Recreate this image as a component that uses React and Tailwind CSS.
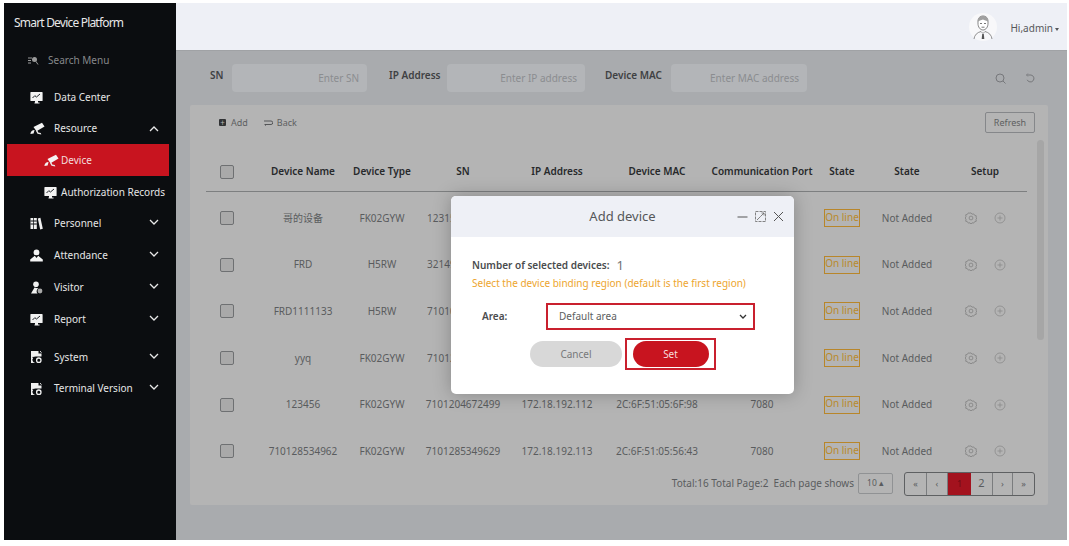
import React from "react";

const Monitor = () => (
  <svg width="13" height="13" viewBox="0 0 13 13" className="shrink-0">
    <path d="M1 1h11a.6.6 0 0 1 .6.6v7.800a.6.6 0 0 1-.6.6H1a.6.6 0 0 1-.6-.6V1.600A.6.6 0 0 1 1 1z" fill="#f2f2f2" />
    <path d="M2.500 7l2.300-2.300 1.700 1.300 3.500-3" fill="none" stroke="#20242a" strokeWidth="1" />
    <path d="M5 10h3v1.500h1.500v1h-5v-1H5z" fill="#f2f2f2" />
  </svg>
);
const Camera = () => (
  <svg width="15" height="13" viewBox="0 0 15 13" className="shrink-0">
    <path d="M3.500 5L12 .8l2.500 3.700-8 4.800z" fill="#f4f4f4" />
    <path d="M6 9l1.300-.7 1 2.200 2.500.5.500 1.500-3.800-.8z" fill="#e8e8e8" />
    <path d="M.4 12c.2-2.600 1.800-4 4.200-4l-1 3.500z" fill="#f4f4f4" />
  </svg>
);
const Books = () => (
  <svg width="13" height="13" viewBox="0 0 13 13" className="shrink-0">
    <path d="M.5 1h2.800v11H.5zM4 1h2.800v11H4z" fill="#f0f0f0" />
    <path d="M.5 4h6.300M.5 7h6.300" stroke="#0b0d10" strokeWidth="1" />
    <path d="M7.800 1.400l2.600-.6 2.400 11-2.600.6z" fill="#f0f0f0" />
  </svg>
);
const Person = () => (
  <svg width="13" height="13" viewBox="0 0 13 13" className="shrink-0">
    <circle cx="6.500" cy="3.400" r="2.900" fill="#f4f4f4" />
    <path d="M4.800 6.800L.2 10.400v2.100h12.600v-2.100L8.200 6.800 6.500 9z" fill="#f4f4f4" />
  </svg>
);
const Visitor = () => (
  <svg width="13" height="13" viewBox="0 0 13 13" className="shrink-0">
    <circle cx="6" cy="3.200" r="2.800" fill="#f0f0f0" />
    <path d="M4.500 6.500L1 12.500h6.500A3 3 0 0 1 8.600 7.500z" fill="#f0f0f0" />
    <circle cx="10" cy="10" r="2.400" fill="#a8a8a8" />
  </svg>
);
const Sys = () => (
  <svg width="13" height="14" viewBox="0 0 13 14" className="shrink-0">
    <path d="M1 1h7.500v2.500H11.500V6.500H6.500A2.900 2.900 0 0 0 5.400 13H1z" fill="#f0f0f0" />
    <path d="M2.500 7.400h2.500M2.500 9.800h1.500" stroke="#0b0d10" strokeWidth="1" />
    <circle cx="8.800" cy="10.200" r="2.200" fill="none" stroke="#f0f0f0" strokeWidth="1.300" />
    <path d="M10 1.200l1.500 1.300" stroke="#f0f0f0" strokeWidth="1" />
  </svg>
);
const Chev = ({ up }) => (
  <svg width="10" height="6" viewBox="0 0 10 6" className={up ? "shrink-0" : "mb-[3px] shrink-0"}>
    <path d={up ? "M1 5l4-4 4 4" : "M1 1l4 4 4-4"} fill="none" stroke="#e8e8e8" strokeWidth="1.300" />
  </svg>
);

const menu = [
  { label: "Personnel", icon: <Books />, h: "h-[31.500px]" },
  { label: "Attendance", icon: <Person />, h: "h-[31.500px]" },
  { label: "Visitor", icon: <Visitor />, h: "h-[32px]" },
  { label: "Report", icon: <Monitor />, h: "h-[32px]" },
];

function Item({ icon, label, up }) {
  return (
    <div className="flex h-full items-center pl-[26px] pr-[17px]">
      <span className="flex w-[24px] items-center">{icon}</span>
      <span className="flex-1 text-[#e6e6e6]">{label}</span>
      <Chev up={up} />
    </div>
  );
}

const rows = [
  ["哥的设备", "FK02GYW", "12315"],
  ["FRD", "H5RW", "32149"],
  ["FRD1111133", "H5RW", "71010"],
  ["yyq", "FK02GYW", "71012"],
  ["123456", "FK02GYW", "7101204672499", "172.18.192.112", "2C:6F:51:05:6F:98", "7080"],
  ["710128534962", "FK02GYW", "7101285349629", "172.18.192.113", "2C:6F:51:05:56:43", "7080"],
];

const gridCols = "grid grid-cols-[56px_82px_76px_86px_102px_98px_112px_48px_82px_74px]";

const Check = () => (
  <div className="pl-[14px]">
    <div className="h-[14px] w-[14px] rounded-[2px] border border-[#6e7072] bg-[#a9a9a9]" />
  </div>
);

const Gear = () => (
  <svg width="12" height="12" viewBox="0 0 12 12">
    <path d="M6 .8l1 1.400 1.700-.3.900 1.400 1.700.5-.3 1.800L11.800 6l-.8 1.400.3 1.800-1.700.5-.9 1.400-1.700-.3-1 1.400-1-1.400-1.700.3-.9-1.400-1.700-.5.3-1.800L.2 6 1 4.600l-.3-1.800 1.700-.5.900-1.400 1.700.3z" fill="none" stroke="#828282" strokeWidth=".8" />
    <circle cx="6" cy="6" r="1.900" fill="none" stroke="#828282" strokeWidth=".8" />
  </svg>
);
const Plus = () => (
  <svg width="12" height="12" viewBox="0 0 12 12">
    <circle cx="6" cy="6" r="5" fill="none" stroke="#8a8a8a" strokeWidth=".8" />
    <path d="M3.500 6h5M6 3.500v5" stroke="#8a8a8a" strokeWidth=".8" />
  </svg>
);

function Avatar() {
  return (
    <svg width="28" height="28" viewBox="0 0 28 28" className="mb-[3px]">
      <circle cx="14" cy="14" r="14" fill="#f8f8fa" />
      <path d="M9 10c-.5-5 2-7 5-7s5.500 2 5 7c.2 4-2.200 7-5 7s-5.200-3-5-7z" fill="#fff" stroke="#6a6a6a" strokeWidth=".8" />
      <path d="M9 9c1-2 3-1.500 5-2.500 1 1 4 1 5 2.500 .5-4-2-6-5-6s-5.500 2-5 6z" fill="#a0a0a0" />
      <path d="M11 10.500h2M15 10.500h2M12.500 14.200h3" stroke="#555" strokeWidth=".8" />
      <path d="M5 26c.5-4 3-6.500 7-7.500l2 2 2-2c4 1 6.500 3.500 7 7.500" fill="none" stroke="#777" strokeWidth=".8" />
      <path d="M13.200 21h1.600l.5 5h-2.600z" fill="#555" />
    </svg>
  );
}

function Field({ label, placeholder, labelW, w }) {
  return (
    <div className="flex items-center">
      <span className={`${labelW} mb-[5px] font-semibold text-[#3f4143]`}>{label}</span>
      <div className={`${w} flex h-[28px] items-center justify-end rounded-[4px] bg-[#b3b5b8] pr-[8px] text-[#8b8d90]`}>{placeholder}</div>
    </div>
  );
}

const pageWidths = ["w-[22px]", "w-[21px]", "w-[23px]", "w-[22px] text-[11px]", "w-[20px]", "w-[21px]"];

export default function App() {
  return (
    <div className="relative h-[546px] w-[1069px] overflow-hidden bg-white pb-[6px] pl-[4px] pr-[2px] pt-[3px] text-[10px] font-['Noto_Sans','Noto_Sans_CJK_SC',sans-serif]">
      <div className="flex h-full">
        <aside className="flex w-[172px] shrink-0 flex-col bg-[#0b0d10]">
          <div className="flex h-[40px] items-center pl-[10px] text-[12px] tracking-[-0.8px] text-[#e8e8e8]">Smart Device Platform</div>
          <div className="flex h-[35px] items-center pl-[23px] text-[#86888a]">
            <svg width="12" height="9" viewBox="0 0 12 9" className="mr-[9px]">
              <path d="M1 2h4M1 4.500h3M1 7h3" stroke="#9a9a9a" strokeWidth="1" />
              <circle cx="7.500" cy="3.500" r="2.500" fill="#9a9a9a" />
              <path d="M9 5.500l2 3" stroke="#9a9a9a" strokeWidth="1" />
            </svg>
            Search Menu
          </div>
          <div className="mt-[3px] h-[32px]">
            <div className="flex h-full items-center pl-[26px]">
              <span className="flex w-[24px] items-center"><Monitor /></span>
              <span className="text-[#e6e6e6]">Data Center</span>
            </div>
          </div>
          <div className="h-[31px]"><Item icon={<Camera />} label="Resource" up /></div>
          <div className="ml-[3px] mr-[7px] flex h-[32px] items-center bg-[#c8141f] pl-[37px] text-[#f2dede]">
            <span className="flex w-[17px] items-center"><Camera /></span>
            Device
          </div>
          <div className="flex h-[32px] items-center pl-[40px] text-[#e6e6e6]">
            <span className="flex w-[17px] items-center"><Monitor /></span>
            Authorization Records
          </div>
          {menu.map((m) => (
            <div key={m.label} className={m.h}><Item icon={m.icon} label={m.label} /></div>
          ))}
          <div className="h-[6px]" />
          <div className="h-[32px]"><Item icon={<Sys />} label="System" /></div>
          <div className="h-[31px]"><Item icon={<Sys />} label="Terminal Version" /></div>
        </aside>

        <main className="flex min-w-0 flex-1 flex-col bg-[#a9abae]">
          <header className="flex h-[48px] shrink-0 items-center justify-end border-b border-[#a0a2a5] bg-[#eef0f6] pr-[8px] pt-[4px]">
            <Avatar />
            <span className="ml-[13px] text-[#55575a]">Hi,admin</span>
            <span className="ml-[2px] mt-[2px] h-0 w-0 border-x-[2.500px] border-t-[3px] border-x-transparent border-t-[#55575a]" />
          </header>

          <div className="flex h-[54px] shrink-0 items-center justify-between pl-[34px] pr-[32px]">
            <div className="flex items-center">
              <Field label="SN" placeholder="Enter SN" labelW="w-[22px]" w="w-[135px]" />
              <Field label="IP Address" placeholder="Enter IP address" labelW="ml-[22px] w-[58px]" w="w-[138px]" />
              <Field label="Device MAC" placeholder="Enter MAC address" labelW="ml-[20px] w-[66px]" w="w-[136px]" />
            </div>
            <div className="flex items-center gap-[19px]">
              <svg width="11" height="11" viewBox="0 0 11 11"><circle cx="5" cy="5" r="4" fill="none" stroke="#707275" strokeWidth=".9" /><path d="M8 8l2.500 2.500" stroke="#707275" strokeWidth=".9" /></svg>
              <svg width="10" height="11" viewBox="0 0 10 11"><path d="M2.500 2H6a3.500 3.500 0 1 1-3.800 4.800M2.800.6L1.500 2l1.300 1.400" fill="none" stroke="#707275" strokeWidth=".9" /></svg>
            </div>
          </div>

          <section className="relative ml-[14px] mr-[19px] flex h-[400px] shrink-0 flex-col rounded-[2px] bg-[#b4b4b4] pl-[16px] pr-[21px]">
            <div className="flex h-[45px] shrink-0 items-center justify-between pb-[10px] pl-[13px]">
              <div className="flex items-center text-[9px] text-[#5d5f61]">
                <span className="mr-[5px] flex h-[7px] w-[7px] items-center justify-center rounded-[1px] bg-[#303234] text-[8px] leading-none text-[#b4b4b4]">+</span>
                Add
                <svg width="9" height="6" viewBox="0 0 9 6" className="ml-[16px] mr-[4px]"><path d="M0 1h7a1.500 1.500 0 0 1 0 3.500H1M2 5.500L.5 4.500" fill="none" stroke="#4a4c4e" strokeWidth=".9" /></svg>
                Back
              </div>
              <div className="-mr-[8px] flex h-[21px] w-[50px] items-center justify-center rounded-[2px] border border-[#85878a] text-[9px] text-[#5d5f61]">Refresh</div>
            </div>

            <div className={`${gridCols} h-[42px] shrink-0 items-center border-b border-[#7d7f80] pt-[2px] text-center font-semibold text-[#27292b]`}>
              <Check />
              <span>Device Name</span>
              <span>Device Type</span>
              <span>SN</span>
              <span>IP Address</span>
              <span>Device MAC</span>
              <span className="whitespace-nowrap">Communication Port</span>
              <span>State</span>
              <span>State</span>
              <span>Setup</span>
            </div>
            <div className="h-[3px] shrink-0" />
            {rows.map((r, i) => (
              <div key={i} className={`${gridCols} h-[46.600px] shrink-0 items-center text-center text-[#5a5c5e]`}>
                <Check />
                <span>{r[0]}</span>
                <span>{r[1]}</span>
                <span className={r[3] ? "" : "pl-[7px] text-left"}>{r[2]}</span>
                <span>{r[3] || ""}</span>
                <span className="whitespace-nowrap">{r[4] || ""}</span>
                <span>{r[5] || ""}</span>
                <span className="mx-auto flex h-[18px] w-[36px] items-center justify-center whitespace-nowrap border border-[#b8862a] pb-[2px] text-[#b98a2c]">On line</span>
                <span>Not Added</span>
                <span className="flex items-center justify-center gap-[17px]"><Gear /><Plus /></span>
              </div>
            ))}
            <div className="mt-[-3px] flex items-center justify-end text-[#5a5c5e]">
              <span>Total:16 Total Page:2&nbsp; Each page shows</span>
              <span className="ml-[4px] flex h-[21px] w-[35px] items-center justify-center rounded-[2px] border border-[#909294] text-[8.500px]">10 ▴</span>
              <div className="-mr-[8px] ml-[11px] flex h-[24px] overflow-hidden rounded-[3px] border border-[#5e6062] text-[9px]">
                {["«", "‹", "1", "2", "›", "»"].map((p, i) => (
                  <span key={p} className={`flex items-center justify-center ${pageWidths[i]} ${i === 2 ? "bg-[#a3121e] text-[#6e0c14]" : i === 5 ? "" : "border-r border-[#7a7c7e]"}`}>{p}</span>
                ))}
              </div>
            </div>
            <div className="absolute right-[4px] top-[35px] h-[200px] w-[7px] rounded-[4px] bg-[#a6a6a6]" />
          </section>
        </main>
      </div>

      <div className="absolute left-[451px] top-[196px] flex h-[198px] w-[343px] flex-col overflow-hidden rounded-[5px] bg-white shadow-[0_0_18px_rgba(0,0,0,0.25)]">
        <div className="relative flex h-[41px] shrink-0 items-center justify-center bg-[#eef0f6] text-[13px] text-[#555759]">
          Add device
          <div className="absolute right-[10px] top-[15px] flex items-center gap-[7px]">
            <svg width="11" height="11" viewBox="0 0 11 11"><path d="M.5 6h10" stroke="#555" strokeWidth="1" /></svg>
            <svg width="11" height="11" viewBox="0 0 11 11"><rect x=".5" y=".5" width="10" height="10" fill="none" stroke="#666" strokeWidth=".8" strokeDasharray="3 1" /><path d="M5.500 5.500L9 2M6.500 2H9v2.500M5.500 5.500L2 9" fill="none" stroke="#666" strokeWidth=".8" /></svg>
            <svg width="11" height="11" viewBox="0 0 11 11"><path d="M1 1l9 9M10 1l-9 9" stroke="#555" strokeWidth="1" /></svg>
          </div>
        </div>
        <div className="flex flex-1 flex-col pl-[21px] pt-[19px]">
          <div className="flex h-[19px] items-center font-semibold text-[#4a4c4e]">
            Number of selected devices:
            <span className="ml-[7px] text-[13px] font-normal leading-none text-[#707274]">1</span>
          </div>
          <div className="flex h-[16px] items-center text-[#eda52e]">Select the device binding region (default is the first region)</div>
          <div className="mt-[12px] flex items-center pl-[10px]">
            <span className="w-[64px] font-semibold text-[#4a4c4e]">Area:</span>
            <div className="flex h-[27px] w-[209px] items-center justify-between border-2 border-[#c9202e] pl-[11px] pr-[6px] text-[#5c5e60]">
              Default area
              <svg width="8" height="5" viewBox="0 0 8 5"><path d="M1 1l3 3 3-3" fill="none" stroke="#333" strokeWidth="1.300" /></svg>
            </div>
          </div>
          <div className="mt-[8px] flex items-center pl-[58px]">
            <div className="flex h-[26px] w-[92px] items-center justify-center rounded-full bg-[#d8d8d8] text-[#77797b]">Cancel</div>
            <div className="ml-[3px] flex h-[32px] w-[91px] items-center justify-center border-2 border-[#c9202e]">
              <div className="flex h-[26px] w-[76px] items-center justify-center rounded-full bg-[#c8141f] text-[#f6dcdc]">Set</div>
            </div>
          </div>
        </div>
      </div>
    </div>
  );
}
